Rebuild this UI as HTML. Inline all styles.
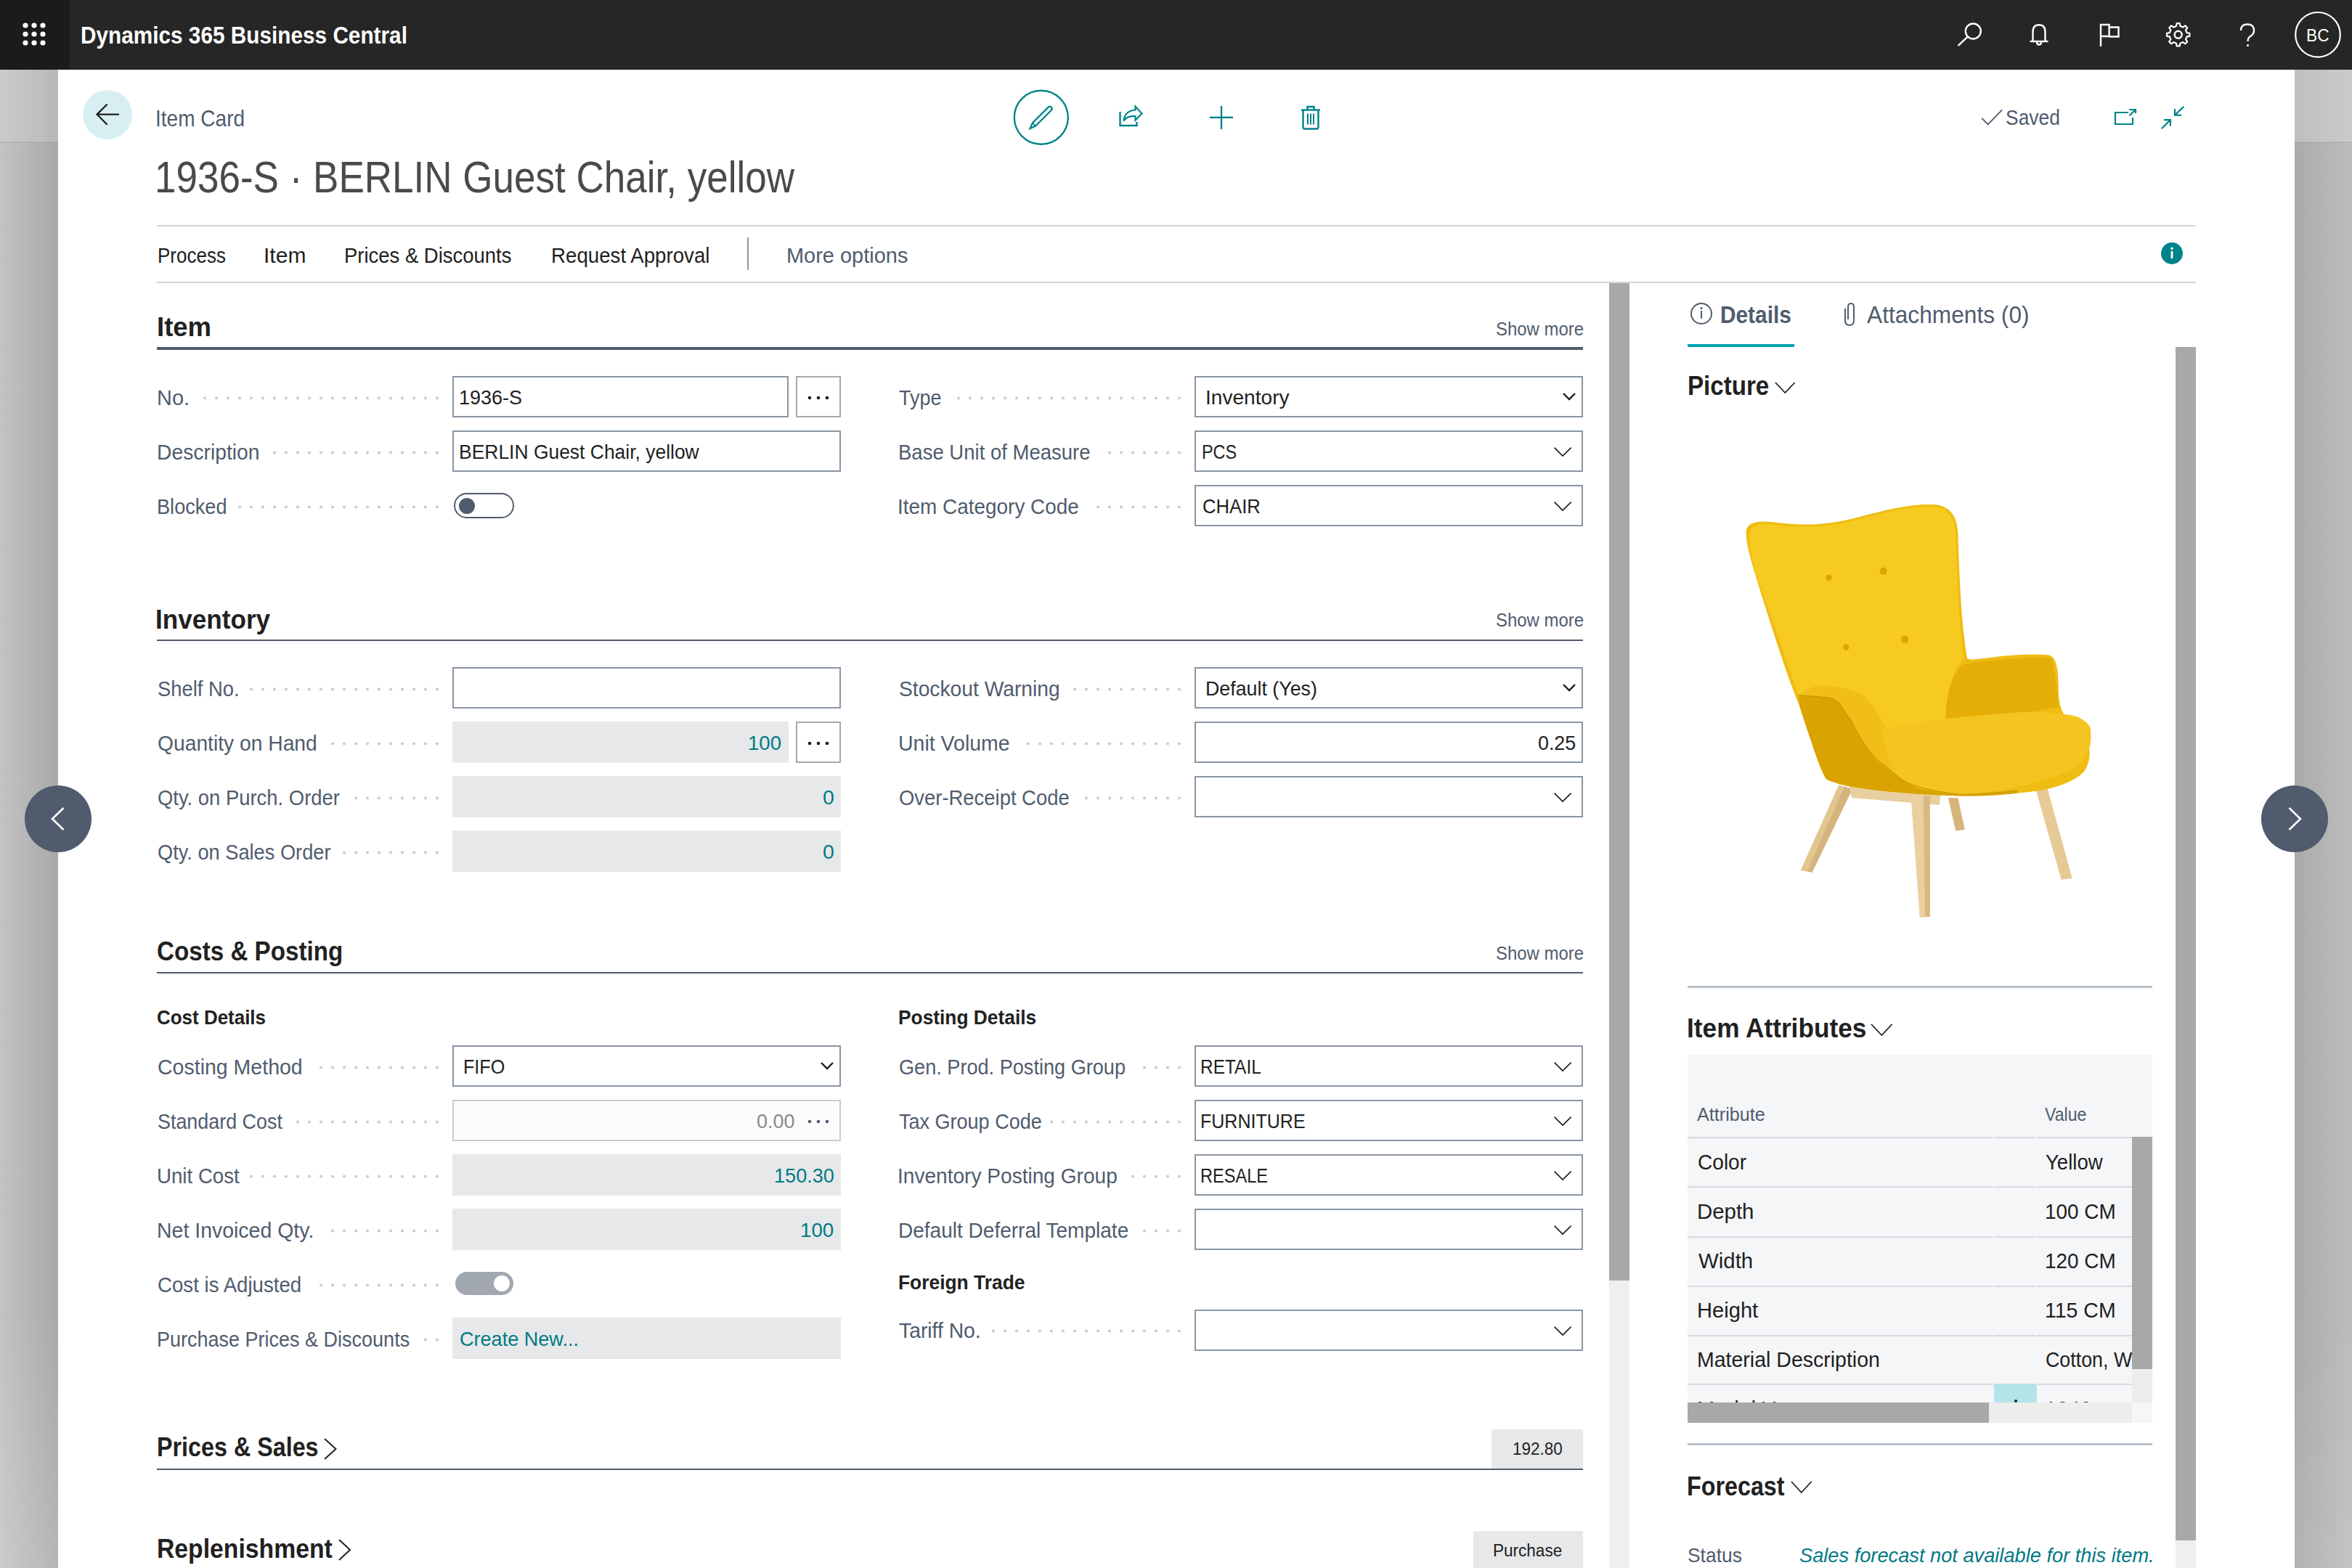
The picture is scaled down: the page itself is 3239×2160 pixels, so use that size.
<!DOCTYPE html>
<html><head><meta charset="utf-8"><title>Item Card</title>
<style>
html,body{margin:0;padding:0;width:3239px;height:2160px;overflow:hidden;background:#fff;font-family:"Liberation Sans",sans-serif}
.t{position:absolute;white-space:nowrap;transform-origin:0 0;font-family:"Liberation Sans",sans-serif}
</style></head><body>
<div style="position:absolute;left:0;top:96px;width:80px;height:100px;background:linear-gradient(to right,#cbcbcb,#b8b8b8)"></div>
<div style="position:absolute;left:0;top:196px;width:80px;height:1964px;background:linear-gradient(to bottom,rgba(255,255,255,0) 82%,rgba(255,255,255,0.14) 100%),linear-gradient(to right,#c3c3c3,#a9a9a9)"></div>
<div style="position:absolute;left:0px;top:195px;width:80px;height:2px;background:rgba(0,0,0,0.05);"></div>
<div style="position:absolute;left:3160px;top:96px;width:79px;height:100px;background:linear-gradient(to right,#bfbfbf,#cacaca)"></div>
<div style="position:absolute;left:3160px;top:196px;width:79px;height:1964px;background:linear-gradient(to bottom,rgba(255,255,255,0) 82%,rgba(255,255,255,0.1) 100%),linear-gradient(to right,#aaaaaa,#bdbdbd)"></div>
<div style="position:absolute;left:3160px;top:195px;width:79px;height:2px;background:rgba(0,0,0,0.05);"></div>
<div style="position:absolute;left:80px;top:96px;width:3080px;height:2064px;background:#ffffff;"></div>
<div style="position:absolute;left:0px;top:0px;width:3239px;height:96px;background:#262626;"></div>
<div style="position:absolute;left:0px;top:0px;width:96px;height:96px;background:#1b1b1b;"></div>
<svg style="position:absolute;left:0;top:0" width="96" height="96"><circle cx="35" cy="35" r="3.6" fill="#fff"/><circle cx="47" cy="35" r="3.6" fill="#fff"/><circle cx="59" cy="35" r="3.6" fill="#fff"/><circle cx="35" cy="47" r="3.6" fill="#fff"/><circle cx="47" cy="47" r="3.6" fill="#fff"/><circle cx="59" cy="47" r="3.6" fill="#fff"/><circle cx="35" cy="59" r="3.6" fill="#fff"/><circle cx="47" cy="59" r="3.6" fill="#fff"/><circle cx="59" cy="59" r="3.6" fill="#fff"/></svg>
<svg style="position:absolute;left:2680px;top:20px;overflow:visible" width="560" height="70" viewBox="2680 20 560 70">
<g fill="none" stroke="#fff" stroke-width="2.4">
<circle cx="2717.3" cy="43" r="10.5"/><line x1="2696.6" y1="62.8" x2="2709.8" y2="50.6"/>
<path d="M2799.5,57 V44 Q2799.5,34.3 2808,34.3 Q2816.5,34.3 2816.5,44 V57"/><line x1="2795.5" y1="57" x2="2820.5" y2="57"/><path d="M2805,58 Q2805,61.5 2808,61.5 Q2811,61.5 2811,58"/>
<path d="M2893,64 V34 H2904.6 V50 H2893"/><path d="M2904.6,37.5 H2917.5 V50.5 H2904.6"/>
<path d="M3011.61,45.14 L3015.37,45.75 L3015.37,49.85 L3011.61,50.46 L3010.00,54.34 L3012.23,57.43 L3009.33,60.33 L3006.24,58.10 L3002.36,59.71 L3001.75,63.47 L2997.65,63.47 L2997.04,59.71 L2993.16,58.10 L2990.07,60.33 L2987.17,57.43 L2989.40,54.34 L2987.79,50.46 L2984.03,49.85 L2984.03,45.75 L2987.79,45.14 L2989.40,41.26 L2987.17,38.17 L2990.07,35.27 L2993.16,37.50 L2997.04,35.89 L2997.65,32.13 L3001.75,32.13 L3002.36,35.89 L3006.24,37.50 L3009.33,35.27 L3012.23,38.17 L3010.00,41.26 Z" stroke-width="2.2" stroke-linejoin="round"/><circle cx="2999.7" cy="47.8" r="5"/>
<path d="M3086,42 Q3086,33.5 3095,33.5 Q3104,33.5 3104,42 Q3104,47 3099,50 Q3095.5,52 3095.5,57"/>
<circle cx="3192" cy="47.8" r="30.8" stroke-width="2.2"/>
</g><circle cx="3095.5" cy="62.5" r="1.6" fill="#fff"/>
</svg>
<div style="position:absolute;left:114px;top:124px;width:68px;height:68px;border-radius:50%;background:#d8eff2"></div>
<svg style="position:absolute;left:114px;top:124px" width="68" height="68" viewBox="114 124 68 68"><g fill="none" stroke="#1b1b1b" stroke-width="2.2"><path d="M147.7,143.5 L133.5,157.6 L147.7,171.8"/><line x1="133.5" y1="157.6" x2="164" y2="157.6"/></g></svg>
<svg style="position:absolute;left:1380px;top:110px;overflow:visible" width="460" height="110" viewBox="1380 110 460 110">
<g fill="none" stroke="#00838a" stroke-width="2.4" stroke-linejoin="miter">
<circle cx="1433.8" cy="161.8" r="37"/>
<path d="M1421.9,169.4 L1443.9,147.4 A3,3 0 0 1 1448.1,151.6 L1426.1,173.6 L1418.5,177 Z" stroke-width="2.2"/><line x1="1421.9" y1="169.4" x2="1426.1" y2="173.6" stroke-width="2"/>
<path d="M1542.5,154 V173 H1565.5 V168"/>
<path d="M1547.5,166.5 Q1549,152.5 1563.5,151.5 V146.5 L1572.5,156.5 L1563.5,165.5 V160 Q1552,159.5 1547.5,166.5 Z" stroke-width="2.2"/>
<line x1="1666" y1="161.8" x2="1698" y2="161.8"/><line x1="1682" y1="146" x2="1682" y2="178"/>
<line x1="1792" y1="151.5" x2="1818" y2="151.5"/><path d="M1800.5,151.5 V147 H1809.5 V151.5"/>
<path d="M1794.5,151.5 V175 Q1794.5,177.5 1797,177.5 H1813 Q1815.5,177.5 1815.5,175 V151.5"/>
<line x1="1801" y1="156.5" x2="1801" y2="171.5" stroke-width="2"/><line x1="1805" y1="156.5" x2="1805" y2="171.5" stroke-width="2"/><line x1="1809" y1="156.5" x2="1809" y2="171.5" stroke-width="2"/>
</g></svg>
<svg style="position:absolute;left:2700px;top:130px;overflow:visible" width="340" height="70" viewBox="2700 130 340 70">
<polyline points="2729,162.7 2737.6,171.5 2757.2,151.4" fill="none" stroke="#505c6d" stroke-width="1.8"/>
<g fill="none" stroke="#00838a" stroke-width="2.2">
<path d="M2931,155 H2913 V171 H2937 V162"/><line x1="2932.4" y1="159.3" x2="2941" y2="151"/><path d="M2932,151 H2941 V156"/>
<line x1="2976.7" y1="177.2" x2="2988.9" y2="165.1"/><path d="M2980,165.1 H2988.9 V173.5"/>
<line x1="3007.3" y1="146.7" x2="2995" y2="158.6"/><path d="M2995,150.1 V158.6 H3003.9"/>
</g></svg>
<div style="position:absolute;left:216px;top:310px;width:2808px;height:2px;background:#d2d6db;"></div>
<div style="position:absolute;left:216px;top:388px;width:2808px;height:2px;background:#d2d6db;"></div>
<div style="position:absolute;left:1029px;top:327px;width:2px;height:45px;background:#8d98a5;"></div>
<div style="position:absolute;left:2976px;top:333.5px;width:30px;height:30px;border-radius:50%;background:#00838a"></div>
<svg style="position:absolute;left:2976px;top:333.5px" width="30" height="30"><rect x="13.6" y="12" width="2.8" height="10" fill="#fff"/><circle cx="15" cy="8.3" r="1.8" fill="#fff"/></svg>
<div style="position:absolute;left:216px;top:478px;width:1964px;height:4px;background:#505c6d;"></div>
<div style="position:absolute;left:216px;top:881px;width:1964px;height:2px;background:#505c6d;"></div>
<div style="position:absolute;left:216px;top:1339px;width:1964px;height:2px;background:#505c6d;"></div>
<div style="position:absolute;left:2054px;top:1969px;width:126px;height:54px;background:#e6e8ea;"></div>
<div style="position:absolute;left:2029px;top:2109px;width:151px;height:51px;background:#e6e8ea;"></div>
<div style="position:absolute;left:216px;top:2023px;width:1964px;height:2px;background:#505c6d;"></div>
<svg style="position:absolute;left:445px;top:1980px" width="19.5" height="32"><polyline points="2,2 17.5,16.0 2,30" fill="none" stroke="#212121" stroke-width="2"/></svg>
<svg style="position:absolute;left:465px;top:2119px" width="19" height="32"><polyline points="2,2 17,16.0 2,30" fill="none" stroke="#212121" stroke-width="2"/></svg>
<svg style="position:absolute;left:0;top:0" width="3239" height="2160"><g fill="#c9cdd3"><circle cx="602.0" cy="548.5" r="2.1"/><circle cx="586.0" cy="548.5" r="2.1"/><circle cx="570.0" cy="548.5" r="2.1"/><circle cx="554.0" cy="548.5" r="2.1"/><circle cx="538.0" cy="548.5" r="2.1"/><circle cx="522.0" cy="548.5" r="2.1"/><circle cx="506.0" cy="548.5" r="2.1"/><circle cx="490.0" cy="548.5" r="2.1"/><circle cx="474.0" cy="548.5" r="2.1"/><circle cx="458.0" cy="548.5" r="2.1"/><circle cx="442.0" cy="548.5" r="2.1"/><circle cx="426.0" cy="548.5" r="2.1"/><circle cx="410.0" cy="548.5" r="2.1"/><circle cx="394.0" cy="548.5" r="2.1"/><circle cx="378.0" cy="548.5" r="2.1"/><circle cx="362.0" cy="548.5" r="2.1"/><circle cx="346.0" cy="548.5" r="2.1"/><circle cx="330.0" cy="548.5" r="2.1"/><circle cx="314.0" cy="548.5" r="2.1"/><circle cx="298.0" cy="548.5" r="2.1"/><circle cx="282.0" cy="548.5" r="2.1"/><circle cx="602.0" cy="623.5" r="2.1"/><circle cx="586.0" cy="623.5" r="2.1"/><circle cx="570.0" cy="623.5" r="2.1"/><circle cx="554.0" cy="623.5" r="2.1"/><circle cx="538.0" cy="623.5" r="2.1"/><circle cx="522.0" cy="623.5" r="2.1"/><circle cx="506.0" cy="623.5" r="2.1"/><circle cx="490.0" cy="623.5" r="2.1"/><circle cx="474.0" cy="623.5" r="2.1"/><circle cx="458.0" cy="623.5" r="2.1"/><circle cx="442.0" cy="623.5" r="2.1"/><circle cx="426.0" cy="623.5" r="2.1"/><circle cx="410.0" cy="623.5" r="2.1"/><circle cx="394.0" cy="623.5" r="2.1"/><circle cx="378.0" cy="623.5" r="2.1"/><circle cx="602.0" cy="698.5" r="2.1"/><circle cx="586.0" cy="698.5" r="2.1"/><circle cx="570.0" cy="698.5" r="2.1"/><circle cx="554.0" cy="698.5" r="2.1"/><circle cx="538.0" cy="698.5" r="2.1"/><circle cx="522.0" cy="698.5" r="2.1"/><circle cx="506.0" cy="698.5" r="2.1"/><circle cx="490.0" cy="698.5" r="2.1"/><circle cx="474.0" cy="698.5" r="2.1"/><circle cx="458.0" cy="698.5" r="2.1"/><circle cx="442.0" cy="698.5" r="2.1"/><circle cx="426.0" cy="698.5" r="2.1"/><circle cx="410.0" cy="698.5" r="2.1"/><circle cx="394.0" cy="698.5" r="2.1"/><circle cx="378.0" cy="698.5" r="2.1"/><circle cx="362.0" cy="698.5" r="2.1"/><circle cx="346.0" cy="698.5" r="2.1"/><circle cx="330.0" cy="698.5" r="2.1"/><circle cx="602.0" cy="949.5" r="2.1"/><circle cx="586.0" cy="949.5" r="2.1"/><circle cx="570.0" cy="949.5" r="2.1"/><circle cx="554.0" cy="949.5" r="2.1"/><circle cx="538.0" cy="949.5" r="2.1"/><circle cx="522.0" cy="949.5" r="2.1"/><circle cx="506.0" cy="949.5" r="2.1"/><circle cx="490.0" cy="949.5" r="2.1"/><circle cx="474.0" cy="949.5" r="2.1"/><circle cx="458.0" cy="949.5" r="2.1"/><circle cx="442.0" cy="949.5" r="2.1"/><circle cx="426.0" cy="949.5" r="2.1"/><circle cx="410.0" cy="949.5" r="2.1"/><circle cx="394.0" cy="949.5" r="2.1"/><circle cx="378.0" cy="949.5" r="2.1"/><circle cx="362.0" cy="949.5" r="2.1"/><circle cx="346.0" cy="949.5" r="2.1"/><circle cx="602.0" cy="1024.5" r="2.1"/><circle cx="586.0" cy="1024.5" r="2.1"/><circle cx="570.0" cy="1024.5" r="2.1"/><circle cx="554.0" cy="1024.5" r="2.1"/><circle cx="538.0" cy="1024.5" r="2.1"/><circle cx="522.0" cy="1024.5" r="2.1"/><circle cx="506.0" cy="1024.5" r="2.1"/><circle cx="490.0" cy="1024.5" r="2.1"/><circle cx="474.0" cy="1024.5" r="2.1"/><circle cx="458.0" cy="1024.5" r="2.1"/><circle cx="602.0" cy="1099.5" r="2.1"/><circle cx="586.0" cy="1099.5" r="2.1"/><circle cx="570.0" cy="1099.5" r="2.1"/><circle cx="554.0" cy="1099.5" r="2.1"/><circle cx="538.0" cy="1099.5" r="2.1"/><circle cx="522.0" cy="1099.5" r="2.1"/><circle cx="506.0" cy="1099.5" r="2.1"/><circle cx="490.0" cy="1099.5" r="2.1"/><circle cx="602.0" cy="1174.5" r="2.1"/><circle cx="586.0" cy="1174.5" r="2.1"/><circle cx="570.0" cy="1174.5" r="2.1"/><circle cx="554.0" cy="1174.5" r="2.1"/><circle cx="538.0" cy="1174.5" r="2.1"/><circle cx="522.0" cy="1174.5" r="2.1"/><circle cx="506.0" cy="1174.5" r="2.1"/><circle cx="490.0" cy="1174.5" r="2.1"/><circle cx="474.0" cy="1174.5" r="2.1"/><circle cx="602.0" cy="1470.5" r="2.1"/><circle cx="586.0" cy="1470.5" r="2.1"/><circle cx="570.0" cy="1470.5" r="2.1"/><circle cx="554.0" cy="1470.5" r="2.1"/><circle cx="538.0" cy="1470.5" r="2.1"/><circle cx="522.0" cy="1470.5" r="2.1"/><circle cx="506.0" cy="1470.5" r="2.1"/><circle cx="490.0" cy="1470.5" r="2.1"/><circle cx="474.0" cy="1470.5" r="2.1"/><circle cx="458.0" cy="1470.5" r="2.1"/><circle cx="442.0" cy="1470.5" r="2.1"/><circle cx="602.0" cy="1545.5" r="2.1"/><circle cx="586.0" cy="1545.5" r="2.1"/><circle cx="570.0" cy="1545.5" r="2.1"/><circle cx="554.0" cy="1545.5" r="2.1"/><circle cx="538.0" cy="1545.5" r="2.1"/><circle cx="522.0" cy="1545.5" r="2.1"/><circle cx="506.0" cy="1545.5" r="2.1"/><circle cx="490.0" cy="1545.5" r="2.1"/><circle cx="474.0" cy="1545.5" r="2.1"/><circle cx="458.0" cy="1545.5" r="2.1"/><circle cx="442.0" cy="1545.5" r="2.1"/><circle cx="426.0" cy="1545.5" r="2.1"/><circle cx="410.0" cy="1545.5" r="2.1"/><circle cx="602.0" cy="1620.5" r="2.1"/><circle cx="586.0" cy="1620.5" r="2.1"/><circle cx="570.0" cy="1620.5" r="2.1"/><circle cx="554.0" cy="1620.5" r="2.1"/><circle cx="538.0" cy="1620.5" r="2.1"/><circle cx="522.0" cy="1620.5" r="2.1"/><circle cx="506.0" cy="1620.5" r="2.1"/><circle cx="490.0" cy="1620.5" r="2.1"/><circle cx="474.0" cy="1620.5" r="2.1"/><circle cx="458.0" cy="1620.5" r="2.1"/><circle cx="442.0" cy="1620.5" r="2.1"/><circle cx="426.0" cy="1620.5" r="2.1"/><circle cx="410.0" cy="1620.5" r="2.1"/><circle cx="394.0" cy="1620.5" r="2.1"/><circle cx="378.0" cy="1620.5" r="2.1"/><circle cx="362.0" cy="1620.5" r="2.1"/><circle cx="346.0" cy="1620.5" r="2.1"/><circle cx="602.0" cy="1695.5" r="2.1"/><circle cx="586.0" cy="1695.5" r="2.1"/><circle cx="570.0" cy="1695.5" r="2.1"/><circle cx="554.0" cy="1695.5" r="2.1"/><circle cx="538.0" cy="1695.5" r="2.1"/><circle cx="522.0" cy="1695.5" r="2.1"/><circle cx="506.0" cy="1695.5" r="2.1"/><circle cx="490.0" cy="1695.5" r="2.1"/><circle cx="474.0" cy="1695.5" r="2.1"/><circle cx="458.0" cy="1695.5" r="2.1"/><circle cx="602.0" cy="1770.5" r="2.1"/><circle cx="586.0" cy="1770.5" r="2.1"/><circle cx="570.0" cy="1770.5" r="2.1"/><circle cx="554.0" cy="1770.5" r="2.1"/><circle cx="538.0" cy="1770.5" r="2.1"/><circle cx="522.0" cy="1770.5" r="2.1"/><circle cx="506.0" cy="1770.5" r="2.1"/><circle cx="490.0" cy="1770.5" r="2.1"/><circle cx="474.0" cy="1770.5" r="2.1"/><circle cx="458.0" cy="1770.5" r="2.1"/><circle cx="442.0" cy="1770.5" r="2.1"/><circle cx="602.0" cy="1845.5" r="2.1"/><circle cx="586.0" cy="1845.5" r="2.1"/><circle cx="1624.0" cy="548.5" r="2.1"/><circle cx="1608.0" cy="548.5" r="2.1"/><circle cx="1592.0" cy="548.5" r="2.1"/><circle cx="1576.0" cy="548.5" r="2.1"/><circle cx="1560.0" cy="548.5" r="2.1"/><circle cx="1544.0" cy="548.5" r="2.1"/><circle cx="1528.0" cy="548.5" r="2.1"/><circle cx="1512.0" cy="548.5" r="2.1"/><circle cx="1496.0" cy="548.5" r="2.1"/><circle cx="1480.0" cy="548.5" r="2.1"/><circle cx="1464.0" cy="548.5" r="2.1"/><circle cx="1448.0" cy="548.5" r="2.1"/><circle cx="1432.0" cy="548.5" r="2.1"/><circle cx="1416.0" cy="548.5" r="2.1"/><circle cx="1400.0" cy="548.5" r="2.1"/><circle cx="1384.0" cy="548.5" r="2.1"/><circle cx="1368.0" cy="548.5" r="2.1"/><circle cx="1352.0" cy="548.5" r="2.1"/><circle cx="1336.0" cy="548.5" r="2.1"/><circle cx="1320.0" cy="548.5" r="2.1"/><circle cx="1624.0" cy="623.5" r="2.1"/><circle cx="1608.0" cy="623.5" r="2.1"/><circle cx="1592.0" cy="623.5" r="2.1"/><circle cx="1576.0" cy="623.5" r="2.1"/><circle cx="1560.0" cy="623.5" r="2.1"/><circle cx="1544.0" cy="623.5" r="2.1"/><circle cx="1528.0" cy="623.5" r="2.1"/><circle cx="1624.0" cy="698.5" r="2.1"/><circle cx="1608.0" cy="698.5" r="2.1"/><circle cx="1592.0" cy="698.5" r="2.1"/><circle cx="1576.0" cy="698.5" r="2.1"/><circle cx="1560.0" cy="698.5" r="2.1"/><circle cx="1544.0" cy="698.5" r="2.1"/><circle cx="1528.0" cy="698.5" r="2.1"/><circle cx="1512.0" cy="698.5" r="2.1"/><circle cx="1624.0" cy="949.5" r="2.1"/><circle cx="1608.0" cy="949.5" r="2.1"/><circle cx="1592.0" cy="949.5" r="2.1"/><circle cx="1576.0" cy="949.5" r="2.1"/><circle cx="1560.0" cy="949.5" r="2.1"/><circle cx="1544.0" cy="949.5" r="2.1"/><circle cx="1528.0" cy="949.5" r="2.1"/><circle cx="1512.0" cy="949.5" r="2.1"/><circle cx="1496.0" cy="949.5" r="2.1"/><circle cx="1480.0" cy="949.5" r="2.1"/><circle cx="1624.0" cy="1024.5" r="2.1"/><circle cx="1608.0" cy="1024.5" r="2.1"/><circle cx="1592.0" cy="1024.5" r="2.1"/><circle cx="1576.0" cy="1024.5" r="2.1"/><circle cx="1560.0" cy="1024.5" r="2.1"/><circle cx="1544.0" cy="1024.5" r="2.1"/><circle cx="1528.0" cy="1024.5" r="2.1"/><circle cx="1512.0" cy="1024.5" r="2.1"/><circle cx="1496.0" cy="1024.5" r="2.1"/><circle cx="1480.0" cy="1024.5" r="2.1"/><circle cx="1464.0" cy="1024.5" r="2.1"/><circle cx="1448.0" cy="1024.5" r="2.1"/><circle cx="1432.0" cy="1024.5" r="2.1"/><circle cx="1416.0" cy="1024.5" r="2.1"/><circle cx="1624.0" cy="1099.5" r="2.1"/><circle cx="1608.0" cy="1099.5" r="2.1"/><circle cx="1592.0" cy="1099.5" r="2.1"/><circle cx="1576.0" cy="1099.5" r="2.1"/><circle cx="1560.0" cy="1099.5" r="2.1"/><circle cx="1544.0" cy="1099.5" r="2.1"/><circle cx="1528.0" cy="1099.5" r="2.1"/><circle cx="1512.0" cy="1099.5" r="2.1"/><circle cx="1496.0" cy="1099.5" r="2.1"/><circle cx="1624.0" cy="1470.5" r="2.1"/><circle cx="1608.0" cy="1470.5" r="2.1"/><circle cx="1592.0" cy="1470.5" r="2.1"/><circle cx="1576.0" cy="1470.5" r="2.1"/><circle cx="1624.0" cy="1545.5" r="2.1"/><circle cx="1608.0" cy="1545.5" r="2.1"/><circle cx="1592.0" cy="1545.5" r="2.1"/><circle cx="1576.0" cy="1545.5" r="2.1"/><circle cx="1560.0" cy="1545.5" r="2.1"/><circle cx="1544.0" cy="1545.5" r="2.1"/><circle cx="1528.0" cy="1545.5" r="2.1"/><circle cx="1512.0" cy="1545.5" r="2.1"/><circle cx="1496.0" cy="1545.5" r="2.1"/><circle cx="1480.0" cy="1545.5" r="2.1"/><circle cx="1464.0" cy="1545.5" r="2.1"/><circle cx="1448.0" cy="1545.5" r="2.1"/><circle cx="1624.0" cy="1620.5" r="2.1"/><circle cx="1608.0" cy="1620.5" r="2.1"/><circle cx="1592.0" cy="1620.5" r="2.1"/><circle cx="1576.0" cy="1620.5" r="2.1"/><circle cx="1560.0" cy="1620.5" r="2.1"/><circle cx="1624.0" cy="1695.5" r="2.1"/><circle cx="1608.0" cy="1695.5" r="2.1"/><circle cx="1592.0" cy="1695.5" r="2.1"/><circle cx="1576.0" cy="1695.5" r="2.1"/><circle cx="1624.0" cy="1833.5" r="2.1"/><circle cx="1608.0" cy="1833.5" r="2.1"/><circle cx="1592.0" cy="1833.5" r="2.1"/><circle cx="1576.0" cy="1833.5" r="2.1"/><circle cx="1560.0" cy="1833.5" r="2.1"/><circle cx="1544.0" cy="1833.5" r="2.1"/><circle cx="1528.0" cy="1833.5" r="2.1"/><circle cx="1512.0" cy="1833.5" r="2.1"/><circle cx="1496.0" cy="1833.5" r="2.1"/><circle cx="1480.0" cy="1833.5" r="2.1"/><circle cx="1464.0" cy="1833.5" r="2.1"/><circle cx="1448.0" cy="1833.5" r="2.1"/><circle cx="1432.0" cy="1833.5" r="2.1"/><circle cx="1416.0" cy="1833.5" r="2.1"/><circle cx="1400.0" cy="1833.5" r="2.1"/><circle cx="1384.0" cy="1833.5" r="2.1"/><circle cx="1368.0" cy="1833.5" r="2.1"/></g></svg>
<div style="position:absolute;left:623px;top:518px;width:463px;height:57px;box-sizing:border-box;border:2px solid #8b96a4;background:#fff"></div>
<div style="position:absolute;left:1096px;top:518px;width:62px;height:57px;box-sizing:border-box;border:2px solid #a8a8a8;background:#fff"></div>
<svg style="position:absolute;left:1107.0px;top:543.0px" width="40" height="10"><circle cx="8" cy="5" r="2.3" fill="#1b1b1b"/><circle cx="20" cy="5" r="2.3" fill="#1b1b1b"/><circle cx="32" cy="5" r="2.3" fill="#1b1b1b"/></svg>
<div style="position:absolute;left:623px;top:593px;width:535px;height:57px;box-sizing:border-box;border:2px solid #8b96a4;background:#fff"></div>
<div style="position:absolute;left:625px;top:679px;width:83px;height:35px;box-sizing:border-box;border:2px solid #505c6d;border-radius:18px"></div>
<div style="position:absolute;left:632px;top:686px;width:22px;height:22px;border-radius:50%;background:#505c6d"></div>
<div style="position:absolute;left:1645px;top:518px;width:535px;height:57px;box-sizing:border-box;border:2px solid #8b96a4;background:#fff"></div>
<svg style="position:absolute;left:2150px;top:539px" width="22" height="14"><polyline points="3,3 11,11 19,3" fill="none" stroke="#1b1b1b" stroke-width="2.4"/></svg>
<div style="position:absolute;left:1645px;top:593px;width:535px;height:57px;box-sizing:border-box;border:2px solid #8b96a4;background:#fff"></div>
<svg style="position:absolute;left:2138px;top:614px" width="30" height="20"><polyline points="2.6,2.6 14,14 25.6,2.6" fill="none" stroke="#1b1b1b" stroke-width="1.6"/></svg>
<div style="position:absolute;left:1645px;top:668px;width:535px;height:57px;box-sizing:border-box;border:2px solid #8b96a4;background:#fff"></div>
<svg style="position:absolute;left:2138px;top:689px" width="30" height="20"><polyline points="2.6,2.6 14,14 25.6,2.6" fill="none" stroke="#1b1b1b" stroke-width="1.6"/></svg>
<div style="position:absolute;left:623px;top:919px;width:535px;height:57px;box-sizing:border-box;border:2px solid #8b96a4;background:#fff"></div>
<div style="position:absolute;left:623px;top:994px;width:463px;height:57px;background:#e6e8ea;"></div>
<div style="position:absolute;left:1096px;top:994px;width:62px;height:57px;box-sizing:border-box;border:2px solid #a8a8a8;background:#fff"></div>
<svg style="position:absolute;left:1107.0px;top:1019.0px" width="40" height="10"><circle cx="8" cy="5" r="2.3" fill="#1b1b1b"/><circle cx="20" cy="5" r="2.3" fill="#1b1b1b"/><circle cx="32" cy="5" r="2.3" fill="#1b1b1b"/></svg>
<div style="position:absolute;left:623px;top:1069px;width:535px;height:57px;background:#e6e8ea;"></div>
<div style="position:absolute;left:623px;top:1144px;width:535px;height:57px;background:#e6e8ea;"></div>
<div style="position:absolute;left:1645px;top:919px;width:535px;height:57px;box-sizing:border-box;border:2px solid #8b96a4;background:#fff"></div>
<svg style="position:absolute;left:2150px;top:940px" width="22" height="14"><polyline points="3,3 11,11 19,3" fill="none" stroke="#1b1b1b" stroke-width="2.4"/></svg>
<div style="position:absolute;left:1645px;top:994px;width:535px;height:57px;box-sizing:border-box;border:2px solid #8b96a4;background:#fff"></div>
<div style="position:absolute;left:1645px;top:1069px;width:535px;height:57px;box-sizing:border-box;border:2px solid #8b96a4;background:#fff"></div>
<svg style="position:absolute;left:2138px;top:1090px" width="30" height="20"><polyline points="2.6,2.6 14,14 25.6,2.6" fill="none" stroke="#1b1b1b" stroke-width="1.6"/></svg>
<div style="position:absolute;left:623px;top:1440px;width:535px;height:57px;box-sizing:border-box;border:2px solid #8b96a4;background:#fff"></div>
<svg style="position:absolute;left:1128px;top:1461px" width="22" height="14"><polyline points="3,3 11,11 19,3" fill="none" stroke="#1b1b1b" stroke-width="2.4"/></svg>
<div style="position:absolute;left:623px;top:1515px;width:535px;height:57px;box-sizing:border-box;border:2px solid #c8ccd1;background:#fcfcfc"></div>
<svg style="position:absolute;left:1107.0px;top:1540.0px" width="40" height="10"><circle cx="8" cy="5" r="2.3" fill="#505c6d"/><circle cx="20" cy="5" r="2.3" fill="#505c6d"/><circle cx="32" cy="5" r="2.3" fill="#505c6d"/></svg>
<div style="position:absolute;left:623px;top:1590px;width:535px;height:57px;background:#e6e8ea;"></div>
<div style="position:absolute;left:623px;top:1665px;width:535px;height:57px;background:#e6e8ea;"></div>
<div style="position:absolute;left:627px;top:1752px;width:80px;height:32px;border-radius:16px;background:#a2a8b1"></div>
<div style="position:absolute;left:680px;top:1757px;width:22px;height:22px;border-radius:50%;background:#fff"></div>
<div style="position:absolute;left:623px;top:1815px;width:535px;height:57px;background:#e6e8ea;"></div>
<div style="position:absolute;left:1645px;top:1440px;width:535px;height:57px;box-sizing:border-box;border:2px solid #8b96a4;background:#fff"></div>
<svg style="position:absolute;left:2138px;top:1461px" width="30" height="20"><polyline points="2.6,2.6 14,14 25.6,2.6" fill="none" stroke="#1b1b1b" stroke-width="1.6"/></svg>
<div style="position:absolute;left:1645px;top:1515px;width:535px;height:57px;box-sizing:border-box;border:2px solid #8b96a4;background:#fff"></div>
<svg style="position:absolute;left:2138px;top:1536px" width="30" height="20"><polyline points="2.6,2.6 14,14 25.6,2.6" fill="none" stroke="#1b1b1b" stroke-width="1.6"/></svg>
<div style="position:absolute;left:1645px;top:1590px;width:535px;height:57px;box-sizing:border-box;border:2px solid #8b96a4;background:#fff"></div>
<svg style="position:absolute;left:2138px;top:1611px" width="30" height="20"><polyline points="2.6,2.6 14,14 25.6,2.6" fill="none" stroke="#1b1b1b" stroke-width="1.6"/></svg>
<div style="position:absolute;left:1645px;top:1665px;width:535px;height:57px;box-sizing:border-box;border:2px solid #8b96a4;background:#fff"></div>
<svg style="position:absolute;left:2138px;top:1686px" width="30" height="20"><polyline points="2.6,2.6 14,14 25.6,2.6" fill="none" stroke="#1b1b1b" stroke-width="1.6"/></svg>
<div style="position:absolute;left:1645px;top:1804px;width:535px;height:57px;box-sizing:border-box;border:2px solid #8b96a4;background:#fff"></div>
<svg style="position:absolute;left:2138px;top:1825px" width="30" height="20"><polyline points="2.6,2.6 14,14 25.6,2.6" fill="none" stroke="#1b1b1b" stroke-width="1.6"/></svg>
<div style="position:absolute;left:2216px;top:390px;width:28px;height:1374px;background:#a8a8a8;"></div>
<div style="position:absolute;left:2216px;top:1764px;width:28px;height:396px;background:#efefef;"></div>
<div style="position:absolute;left:2996px;top:478px;width:28px;height:1644px;background:#a8a8a8;"></div>
<div style="position:absolute;left:2996px;top:2122px;width:28px;height:38px;background:#efefef;"></div>
<svg style="position:absolute;left:2320px;top:410px" width="50" height="50"><circle cx="23" cy="22" r="14" fill="none" stroke="#505c6d" stroke-width="2"/><rect x="22" y="18" width="2" height="11" fill="#505c6d"/><circle cx="23" cy="14.5" r="1.5" fill="#505c6d"/></svg>
<div style="position:absolute;left:2324px;top:474px;width:147px;height:4px;background:#00a4b1;"></div>
<svg style="position:absolute;left:2530px;top:415px" width="30" height="40"><path d="M11,10 V26 Q11,33 17,33 Q23,33 23,26 V8 Q23,3 19,3 Q15,3 15,8 V25" fill="none" stroke="#505c6d" stroke-width="2"/></svg>
<svg style="position:absolute;left:2443px;top:525px" width="30.59999999999991" height="18"><polyline points="2,2 15.299999999999955,16 28.59999999999991,2" fill="none" stroke="#212121" stroke-width="1.8"/></svg>
<svg style="position:absolute;left:2380px;top:670px" width="520" height="620" viewBox="0 0 1315 1568">
<g>
<polygon points="385,1040 432,1055 292,1345 252,1338" fill="#e2c58f"/>
<polygon points="405,1045 432,1055 292,1345 275,1342" fill="#d3b47c"/>
<polygon points="766,1085 800,1085 824,1196 792,1200" fill="#d6b57d"/>
<polygon points="1062,1025 1104,1025 1198,1365 1160,1370" fill="#e6ca95"/>
<polygon points="420,1040 740,1075 735,1110 430,1085" fill="#e8cf9f"/>
<polygon points="636,1080 702,1080 703,1500 667,1502" fill="#ead0a0"/>
<polygon points="680,1080 702,1080 703,1500 685,1500" fill="#d8b882"/>
</g>
<path d="M62,160 C62,128 100,118 150,124 C250,136 330,140 450,108 C560,78 650,58 722,64 C772,70 796,102 800,160 C805,300 808,450 832,600 L850,604 C950,590 1050,580 1118,588 C1145,598 1150,640 1150,700 C1150,760 1160,800 1205,832 C1262,870 1272,940 1242,990 C1200,1040 1100,1062 1006,1069 C900,1080 817,1083 628,1069 C540,1062 450,1052 391,1038 C365,1030 350,1025 339,1017 C320,980 310,950 297,913 C280,860 265,820 250,771 C230,720 215,680 202,643 C160,520 100,330 80,260 C70,220 62,190 62,160 Z" fill="#efbd12"/>
<path d="M75,165 C75,135 105,128 150,132 C250,144 330,148 450,116 C560,86 650,66 720,72 C765,78 788,108 792,165 C797,300 800,450 820,600 C780,640 760,720 770,820 C700,840 600,860 560,880 C530,820 500,760 476,733 C440,705 380,695 320,695 C280,700 260,715 245,728 C200,600 140,420 100,320 C85,270 75,215 75,165 Z" fill="#f7ca22"/>
<path d="M245,728 C300,730 340,735 363,738 C380,745 385,750 391,757 C410,790 420,805 429,818 C450,860 465,885 477,903 C500,940 520,960 543,974 C570,995 590,1012 604,1022 C630,1040 650,1050 675,1055 C740,1068 780,1072 817,1074 C900,1070 960,1065 1007,1060 L1006,1069 C900,1080 817,1083 628,1069 C540,1062 450,1052 391,1038 C365,1030 350,1025 339,1017 C320,980 310,950 297,913 C280,860 265,820 250,771 Z" fill="#d9a300"/>
<path d="M245,728 C260,712 290,698 321,695 C380,693 430,705 477,733 C500,760 515,780 524,795 C550,840 565,870 581,889 C620,925 650,945 675,951 C720,975 760,990 817,1000 C700,1040 640,1035 604,1022 C590,1012 570,995 543,974 C520,960 500,940 477,903 C465,885 450,860 429,818 C420,805 410,790 391,757 C385,750 380,745 363,738 C340,735 300,730 245,728 Z" fill="#f0be16"/>
<path d="M533,847 C600,830 700,812 770,809 C900,795 980,786 1054,785 C1150,790 1200,795 1220,804 C1250,820 1262,835 1262,847 C1265,880 1262,900 1257,913 C1240,950 1220,970 1196,984 C1150,1010 1100,1025 1054,1036 C950,1060 880,1070 817,1074 C760,1070 700,1058 675,1051 C640,1040 600,1020 581,1000 C560,960 545,900 533,847 Z" fill="#f4c520"/>
<path d="M756,809 C760,720 780,650 817,620 C900,605 1000,597 1125,596 C1140,650 1148,720 1149,771 C1100,778 1080,782 1054,785 C950,790 850,800 756,809 Z" fill="#e4ae06"/>
<path d="M245,728 C300,730 340,735 363,738 C385,750 410,790 429,818 C450,860 465,885 477,903 C500,940 540,970 604,1022 C650,1050 740,1068 817,1074 C900,1070 960,1065 1007,1060" fill="none" stroke="#c99600" stroke-width="3"/>
<g fill="#dba500"><circle cx="350" cy="318" r="11"/><circle cx="540" cy="295" r="13"/><circle cx="410" cy="560" r="11"/><circle cx="615" cy="533" r="13"/></g>
</svg>

<div style="position:absolute;left:2324px;top:1358px;width:640px;height:3px;background:#b9c0c9;"></div>
<svg style="position:absolute;left:2575px;top:1409px" width="32.59999999999991" height="19"><polyline points="2,2 16.299999999999955,17 30.59999999999991,2" fill="none" stroke="#212121" stroke-width="1.8"/></svg>
<div style="position:absolute;left:2324px;top:1453px;width:640px;height:507px;background:#f5f6f8;"></div>
<div style="position:absolute;left:2324px;top:1566px;width:421px;height:2px;background:#d6d9de;"></div>
<div style="position:absolute;left:2747px;top:1566px;width:57px;height:2px;background:#d6d9de;"></div>
<div style="position:absolute;left:2806px;top:1566px;width:158px;height:2px;background:#d6d9de;"></div>
<div style="position:absolute;left:2324px;top:1634px;width:421px;height:2px;background:#d6d9de;"></div>
<div style="position:absolute;left:2747px;top:1634px;width:57px;height:2px;background:#d6d9de;"></div>
<div style="position:absolute;left:2806px;top:1634px;width:130px;height:2px;background:#d6d9de;"></div>
<div style="position:absolute;left:2324px;top:1703px;width:421px;height:2px;background:#d6d9de;"></div>
<div style="position:absolute;left:2747px;top:1703px;width:57px;height:2px;background:#d6d9de;"></div>
<div style="position:absolute;left:2806px;top:1703px;width:130px;height:2px;background:#d6d9de;"></div>
<div style="position:absolute;left:2324px;top:1771px;width:421px;height:2px;background:#d6d9de;"></div>
<div style="position:absolute;left:2747px;top:1771px;width:57px;height:2px;background:#d6d9de;"></div>
<div style="position:absolute;left:2806px;top:1771px;width:130px;height:2px;background:#d6d9de;"></div>
<div style="position:absolute;left:2324px;top:1839px;width:421px;height:2px;background:#d6d9de;"></div>
<div style="position:absolute;left:2747px;top:1839px;width:57px;height:2px;background:#d6d9de;"></div>
<div style="position:absolute;left:2806px;top:1839px;width:130px;height:2px;background:#d6d9de;"></div>
<div style="position:absolute;left:2324px;top:1906px;width:421px;height:2px;background:#d6d9de;"></div>
<div style="position:absolute;left:2747px;top:1906px;width:57px;height:2px;background:#d6d9de;"></div>
<div style="position:absolute;left:2806px;top:1906px;width:130px;height:2px;background:#d6d9de;"></div>
<div style="position:absolute;left:2746px;top:1907px;width:59px;height:25px;background:#b1e5ea;"></div>
<div style="position:absolute;left:2774px;top:1928px;width:4px;height:4px;border-radius:50%;background:#1b1b1b"></div>
<div style="position:absolute;left:2936px;top:1566px;width:28px;height:320px;background:#a8a8a8;"></div>
<div style="position:absolute;left:2936px;top:1886px;width:28px;height:46px;background:#ececec;"></div>
<div style="position:absolute;left:2324px;top:1932px;width:415px;height:28px;background:#a8a8a8;"></div>
<div style="position:absolute;left:2739px;top:1932px;width:197px;height:28px;background:#ededed;"></div>
<div style="position:absolute;left:2324px;top:1988px;width:640px;height:3px;background:#b9c0c9;"></div>
<svg style="position:absolute;left:2465px;top:2039px" width="31.5" height="19"><polyline points="2,2 15.75,17 29.5,2" fill="none" stroke="#212121" stroke-width="1.8"/></svg>
<div style="position:absolute;left:34px;top:1082px;width:92px;height:92px;border-radius:50%;background:#505c6d"></div>
<svg style="position:absolute;left:34px;top:1082px" width="92" height="92"><polyline points="53.5,31 38,46 53.5,61" fill="none" stroke="#fff" stroke-width="2.6"/></svg>
<div style="position:absolute;left:3114px;top:1082px;width:92px;height:92px;border-radius:50%;background:#505c6d"></div>
<svg style="position:absolute;left:3114px;top:1082px" width="92" height="92"><polyline points="38.5,31 54,46 38.5,61" fill="none" stroke="#fff" stroke-width="2.6"/></svg>
<div class="t" style="left:111.23px;top:32.46px;font-size:33.57px;line-height:33.57px;font-weight:700;font-style:normal;color:#ffffff;transform:scaleX(0.8867)">Dynamics 365 Business Central</div>
<div class="t" style="left:3176.13px;top:37.36px;font-size:24.29px;line-height:24.29px;font-weight:400;font-style:normal;color:#ffffff;transform:scaleX(0.9355)">BC</div>
<div class="t" style="left:214.38px;top:147.18px;font-size:32.14px;line-height:32.14px;font-weight:400;font-style:normal;color:#505c6d;transform:scaleX(0.8728)">Item Card</div>
<div class="t" style="left:212.68px;top:212.79px;font-size:61.43px;line-height:61.43px;font-weight:400;font-style:normal;color:#4a4a4a;transform:scaleX(0.8632)">1936-S · BERLIN Guest Chair, yellow</div>
<div class="t" style="left:2762.09px;top:148.35px;font-size:29.00px;line-height:29.00px;font-weight:400;font-style:normal;color:#505c6d;transform:scaleX(0.9114)">Saved</div>
<div class="t" style="left:217.18px;top:337.71px;font-size:28.57px;line-height:28.57px;font-weight:400;font-style:normal;color:#212121;transform:scaleX(0.9100)">Process</div>
<div class="t" style="left:363.15px;top:337.71px;font-size:28.57px;line-height:28.57px;font-weight:400;font-style:normal;color:#212121;transform:scaleX(1.0510)">Item</div>
<div class="t" style="left:474.08px;top:337.71px;font-size:28.57px;line-height:28.57px;font-weight:400;font-style:normal;color:#212121;transform:scaleX(0.9612)">Prices & Discounts</div>
<div class="t" style="left:758.76px;top:337.71px;font-size:28.57px;line-height:28.57px;font-weight:400;font-style:normal;color:#212121;transform:scaleX(0.9689)">Request Approval</div>
<div class="t" style="left:1082.97px;top:337.71px;font-size:28.57px;line-height:28.57px;font-weight:400;font-style:normal;color:#505c6d;transform:scaleX(1.0136)">More options</div>
<div class="t" style="left:216.00px;top:432.51px;font-size:36.57px;line-height:36.57px;font-weight:700;font-style:normal;color:#212121;transform:scaleX(0.9986)">Item</div>
<div class="t" style="left:2059.77px;top:440.74px;font-size:25.71px;line-height:25.71px;font-weight:400;font-style:normal;color:#505c6d;transform:scaleX(0.9320)">Show more</div>
<div class="t" style="left:214.41px;top:835.13px;font-size:37.14px;line-height:37.14px;font-weight:700;font-style:normal;color:#212121;transform:scaleX(0.9461)">Inventory</div>
<div class="t" style="left:2059.77px;top:842.14px;font-size:25.71px;line-height:25.71px;font-weight:400;font-style:normal;color:#505c6d;transform:scaleX(0.9320)">Show more</div>
<div class="t" style="left:216.11px;top:1292.43px;font-size:37.14px;line-height:37.14px;font-weight:700;font-style:normal;color:#212121;transform:scaleX(0.8940)">Costs & Posting</div>
<div class="t" style="left:2059.77px;top:1300.64px;font-size:25.71px;line-height:25.71px;font-weight:400;font-style:normal;color:#505c6d;transform:scaleX(0.9320)">Show more</div>
<div class="t" style="left:216.27px;top:1975.19px;font-size:37.43px;line-height:37.43px;font-weight:700;font-style:normal;color:#212121;transform:scaleX(0.8627)">Prices & Sales</div>
<div class="t" style="left:216.18px;top:2115.43px;font-size:37.14px;line-height:37.14px;font-weight:700;font-style:normal;color:#212121;transform:scaleX(0.9087)">Replenishment</div>
<div class="t" style="left:2082.61px;top:1984.84px;font-size:23.71px;line-height:23.71px;font-weight:400;font-style:normal;color:#212121;transform:scaleX(0.9471)">192.80</div>
<div class="t" style="left:2056.14px;top:2124.36px;font-size:24.29px;line-height:24.29px;font-weight:400;font-style:normal;color:#212121;transform:scaleX(0.9280)">Purchase</div>
<div class="t" style="left:216.02px;top:533.11px;font-size:29.29px;line-height:29.29px;font-weight:400;font-style:normal;color:#505c6d;transform:scaleX(0.9878)">No.</div>
<div class="t" style="left:216.07px;top:608.11px;font-size:29.29px;line-height:29.29px;font-weight:400;font-style:normal;color:#505c6d;transform:scaleX(0.9664)">Description</div>
<div class="t" style="left:216.15px;top:683.11px;font-size:29.29px;line-height:29.29px;font-weight:400;font-style:normal;color:#505c6d;transform:scaleX(0.9267)">Blocked</div>
<div class="t" style="left:217.06px;top:934.11px;font-size:29.29px;line-height:29.29px;font-weight:400;font-style:normal;color:#505c6d;transform:scaleX(0.9359)">Shelf No.</div>
<div class="t" style="left:217.04px;top:1009.11px;font-size:29.29px;line-height:29.29px;font-weight:400;font-style:normal;color:#505c6d;transform:scaleX(0.9644)">Quantity on Hand</div>
<div class="t" style="left:217.06px;top:1084.11px;font-size:29.29px;line-height:29.29px;font-weight:400;font-style:normal;color:#505c6d;transform:scaleX(0.9363)">Qty. on Purch. Order</div>
<div class="t" style="left:217.07px;top:1159.11px;font-size:29.29px;line-height:29.29px;font-weight:400;font-style:normal;color:#505c6d;transform:scaleX(0.9294)">Qty. on Sales Order</div>
<div class="t" style="left:217.03px;top:1455.11px;font-size:29.29px;line-height:29.29px;font-weight:400;font-style:normal;color:#505c6d;transform:scaleX(0.9738)">Costing Method</div>
<div class="t" style="left:217.08px;top:1530.11px;font-size:29.29px;line-height:29.29px;font-weight:400;font-style:normal;color:#505c6d;transform:scaleX(0.9183)">Standard Cost</div>
<div class="t" style="left:216.11px;top:1605.11px;font-size:29.29px;line-height:29.29px;font-weight:400;font-style:normal;color:#505c6d;transform:scaleX(0.9449)">Unit Cost</div>
<div class="t" style="left:216.06px;top:1680.11px;font-size:29.29px;line-height:29.29px;font-weight:400;font-style:normal;color:#505c6d;transform:scaleX(0.9725)">Net Invoiced Qty.</div>
<div class="t" style="left:217.06px;top:1755.11px;font-size:29.29px;line-height:29.29px;font-weight:400;font-style:normal;color:#505c6d;transform:scaleX(0.9440)">Cost is Adjusted</div>
<div class="t" style="left:216.16px;top:1830.11px;font-size:29.29px;line-height:29.29px;font-weight:400;font-style:normal;color:#505c6d;transform:scaleX(0.9221)">Purchase Prices & Discounts</div>
<div class="t" style="left:1237.88px;top:533.11px;font-size:29.29px;line-height:29.29px;font-weight:400;font-style:normal;color:#505c6d;transform:scaleX(0.9213)">Type</div>
<div class="t" style="left:1236.92px;top:608.11px;font-size:29.29px;line-height:29.29px;font-weight:400;font-style:normal;color:#505c6d;transform:scaleX(0.9396)">Base Unit of Measure</div>
<div class="t" style="left:1235.94px;top:683.11px;font-size:29.29px;line-height:29.29px;font-weight:400;font-style:normal;color:#505c6d;transform:scaleX(0.9535)">Item Category Code</div>
<div class="t" style="left:1237.84px;top:934.11px;font-size:29.29px;line-height:29.29px;font-weight:400;font-style:normal;color:#505c6d;transform:scaleX(0.9639)">Stockout Warning</div>
<div class="t" style="left:1236.85px;top:1009.11px;font-size:29.29px;line-height:29.29px;font-weight:400;font-style:normal;color:#505c6d;transform:scaleX(0.9735)">Unit Volume</div>
<div class="t" style="left:1237.86px;top:1084.11px;font-size:29.29px;line-height:29.29px;font-weight:400;font-style:normal;color:#505c6d;transform:scaleX(0.9363)">Over-Receipt Code</div>
<div class="t" style="left:1237.87px;top:1455.11px;font-size:29.29px;line-height:29.29px;font-weight:400;font-style:normal;color:#505c6d;transform:scaleX(0.9260)">Gen. Prod. Posting Group</div>
<div class="t" style="left:1237.88px;top:1530.11px;font-size:29.29px;line-height:29.29px;font-weight:400;font-style:normal;color:#505c6d;transform:scaleX(0.9227)">Tax Group Code</div>
<div class="t" style="left:1235.92px;top:1605.11px;font-size:29.29px;line-height:29.29px;font-weight:400;font-style:normal;color:#505c6d;transform:scaleX(0.9590)">Inventory Posting Group</div>
<div class="t" style="left:1236.89px;top:1680.11px;font-size:29.29px;line-height:29.29px;font-weight:400;font-style:normal;color:#505c6d;transform:scaleX(0.9570)">Default Deferral Template</div>
<div class="t" style="left:1237.83px;top:1818.11px;font-size:29.29px;line-height:29.29px;font-weight:400;font-style:normal;color:#505c6d;transform:scaleX(0.9664)">Tariff No.</div>
<div class="t" style="left:216.05px;top:1388.49px;font-size:27.43px;line-height:27.43px;font-weight:700;font-style:normal;color:#212121;transform:scaleX(0.9465)">Cost Details</div>
<div class="t" style="left:1236.88px;top:1388.49px;font-size:27.43px;line-height:27.43px;font-weight:700;font-style:normal;color:#212121;transform:scaleX(0.9600)">Posting Details</div>
<div class="t" style="left:1236.88px;top:1753.19px;font-size:27.43px;line-height:27.43px;font-weight:700;font-style:normal;color:#212121;transform:scaleX(0.9620)">Foreign Trade</div>
<div class="t" style="left:632.06px;top:534.32px;font-size:27.86px;line-height:27.86px;font-weight:400;font-style:normal;color:#212121;transform:scaleX(0.9690)">1936-S</div>
<div class="t" style="left:632.10px;top:609.32px;font-size:27.86px;line-height:27.86px;font-weight:400;font-style:normal;color:#212121;transform:scaleX(0.9493)">BERLIN Guest Chair, yellow</div>
<div class="t" style="left:1659.98px;top:534.32px;font-size:27.86px;line-height:27.86px;font-weight:400;font-style:normal;color:#212121;transform:scaleX(1.0088)">Inventory</div>
<div class="t" style="left:1654.92px;top:609.32px;font-size:27.86px;line-height:27.86px;font-weight:400;font-style:normal;color:#212121;transform:scaleX(0.8407)">PCS</div>
<div class="t" style="left:1655.68px;top:684.32px;font-size:27.86px;line-height:27.86px;font-weight:400;font-style:normal;color:#212121;transform:scaleX(0.9214)">CHAIR</div>
<div class="t" style="left:1030.02px;top:1010.32px;font-size:27.86px;line-height:27.86px;font-weight:400;font-style:normal;color:#007a84;transform:scaleX(0.9886)">100</div>
<div class="t" style="left:1132.68px;top:1085.32px;font-size:27.86px;line-height:27.86px;font-weight:400;font-style:normal;color:#007a84;transform:scaleX(1.0214)">0</div>
<div class="t" style="left:1132.68px;top:1160.32px;font-size:27.86px;line-height:27.86px;font-weight:400;font-style:normal;color:#007a84;transform:scaleX(1.0214)">0</div>
<div class="t" style="left:1660.08px;top:935.32px;font-size:27.86px;line-height:27.86px;font-weight:400;font-style:normal;color:#212121;transform:scaleX(0.9618)">Default (Yes)</div>
<div class="t" style="left:2117.84px;top:1010.32px;font-size:27.86px;line-height:27.86px;font-weight:400;font-style:normal;color:#212121;transform:scaleX(0.9615)">0.25</div>
<div class="t" style="left:637.90px;top:1456.32px;font-size:27.86px;line-height:27.86px;font-weight:400;font-style:normal;color:#212121;transform:scaleX(0.9017)">FIFO</div>
<div class="t" style="left:1041.83px;top:1531.32px;font-size:27.86px;line-height:27.86px;font-weight:400;font-style:normal;color:#8a8a8a;transform:scaleX(0.9654)">0.00</div>
<div class="t" style="left:1066.05px;top:1606.32px;font-size:27.86px;line-height:27.86px;font-weight:400;font-style:normal;color:#007a84;transform:scaleX(0.9732)">150.30</div>
<div class="t" style="left:1102.01px;top:1681.32px;font-size:27.86px;line-height:27.86px;font-weight:400;font-style:normal;color:#007a84;transform:scaleX(0.9955)">100</div>
<div class="t" style="left:632.53px;top:1831.32px;font-size:27.86px;line-height:27.86px;font-weight:400;font-style:normal;color:#007a84;transform:scaleX(0.9715)">Create New...</div>
<div class="t" style="left:1653.25px;top:1456.32px;font-size:27.86px;line-height:27.86px;font-weight:400;font-style:normal;color:#212121;transform:scaleX(0.8774)">RETAIL</div>
<div class="t" style="left:1653.20px;top:1531.32px;font-size:27.86px;line-height:27.86px;font-weight:400;font-style:normal;color:#212121;transform:scaleX(0.8987)">FURNITURE</div>
<div class="t" style="left:1653.31px;top:1606.32px;font-size:27.86px;line-height:27.86px;font-weight:400;font-style:normal;color:#212121;transform:scaleX(0.8458)">RESALE</div>
<div class="t" style="left:2369.18px;top:418.07px;font-size:32.86px;line-height:32.86px;font-weight:700;font-style:normal;color:#505c6d;transform:scaleX(0.9076)">Details</div>
<div class="t" style="left:2571.00px;top:418.07px;font-size:32.86px;line-height:32.86px;font-weight:400;font-style:normal;color:#505c6d;transform:scaleX(0.9639)">Attachments (0)</div>
<div class="t" style="left:2324.17px;top:513.58px;font-size:36.14px;line-height:36.14px;font-weight:700;font-style:normal;color:#212121;transform:scaleX(0.9167)">Picture</div>
<div class="t" style="left:2323.10px;top:1398.43px;font-size:37.14px;line-height:37.14px;font-weight:700;font-style:normal;color:#212121;transform:scaleX(0.9494)">Item Attributes</div>
<div class="t" style="left:2337.00px;top:1523.14px;font-size:25.71px;line-height:25.71px;font-weight:400;font-style:normal;color:#505c6d;transform:scaleX(0.9789)">Attribute</div>
<div class="t" style="left:2816.00px;top:1523.14px;font-size:25.71px;line-height:25.71px;font-weight:400;font-style:normal;color:#505c6d;transform:scaleX(0.9000)">Value</div>
<div class="t" style="left:2337.56px;top:1585.50px;font-size:30.00px;line-height:30.00px;font-weight:400;font-style:normal;color:#212121;transform:scaleX(0.9357)">Color</div>
<div class="t" style="left:2817.08px;top:1585.50px;font-size:30.00px;line-height:30.00px;font-weight:400;font-style:normal;color:#212121;transform:scaleX(0.9176)">Yellow</div>
<div class="t" style="left:2336.54px;top:1653.50px;font-size:30.00px;line-height:30.00px;font-weight:400;font-style:normal;color:#212121;transform:scaleX(0.9803)">Depth</div>
<div class="t" style="left:2816.14px;top:1653.50px;font-size:30.00px;line-height:30.00px;font-weight:400;font-style:normal;color:#212121;transform:scaleX(0.9307)">100 CM</div>
<div class="t" style="left:2338.50px;top:1721.50px;font-size:30.00px;line-height:30.00px;font-weight:400;font-style:normal;color:#212121;transform:scaleX(0.9800)">Width</div>
<div class="t" style="left:2816.14px;top:1721.50px;font-size:30.00px;line-height:30.00px;font-weight:400;font-style:normal;color:#212121;transform:scaleX(0.9307)">120 CM</div>
<div class="t" style="left:2336.56px;top:1789.50px;font-size:30.00px;line-height:30.00px;font-weight:400;font-style:normal;color:#212121;transform:scaleX(0.9706)">Height</div>
<div class="t" style="left:2816.10px;top:1789.50px;font-size:30.00px;line-height:30.00px;font-weight:400;font-style:normal;color:#212121;transform:scaleX(0.9495)">115 CM</div>
<div class="t" style="left:2336.60px;top:1857.50px;font-size:30.00px;line-height:30.00px;font-weight:400;font-style:normal;color:#212121;transform:scaleX(0.9502)">Material Description</div>
<div class="t" style="left:2817.11px;top:1857.50px;font-size:30.00px;line-height:30.00px;font-weight:400;font-style:normal;color:#212121;transform:scaleX(0.8939)">Cotton, W</div>
<div class="t" style="left:2323.26px;top:2028.83px;font-size:37.14px;line-height:37.14px;font-weight:700;font-style:normal;color:#212121;transform:scaleX(0.8693)">Forecast</div>
<div class="t" style="left:2324.05px;top:2129.32px;font-size:27.86px;line-height:27.86px;font-weight:400;font-style:normal;color:#505c6d;transform:scaleX(0.9481)">Status</div>
<div class="t" style="left:2478.02px;top:2129.32px;font-size:27.86px;line-height:27.86px;font-weight:400;font-style:italic;color:#007a84;transform:scaleX(0.9770)">Sales forecast not available for this item.</div>
<div style="position:absolute;left:2324px;top:1908px;width:612px;height:24px;overflow:hidden"><div class="t" style="left:12.50px;top:17.50px;font-size:30.00px;line-height:30.00px;font-weight:400;font-style:normal;color:#212121;transform:scaleX(1.0000)">Model Year</div></div>
<div style="position:absolute;left:2324px;top:1908px;width:612px;height:24px;overflow:hidden"><div class="t" style="left:492.06px;top:17.50px;font-size:30.00px;line-height:30.00px;font-weight:400;font-style:normal;color:#212121;transform:scaleX(0.9688)">1940</div></div>
</body></html>
